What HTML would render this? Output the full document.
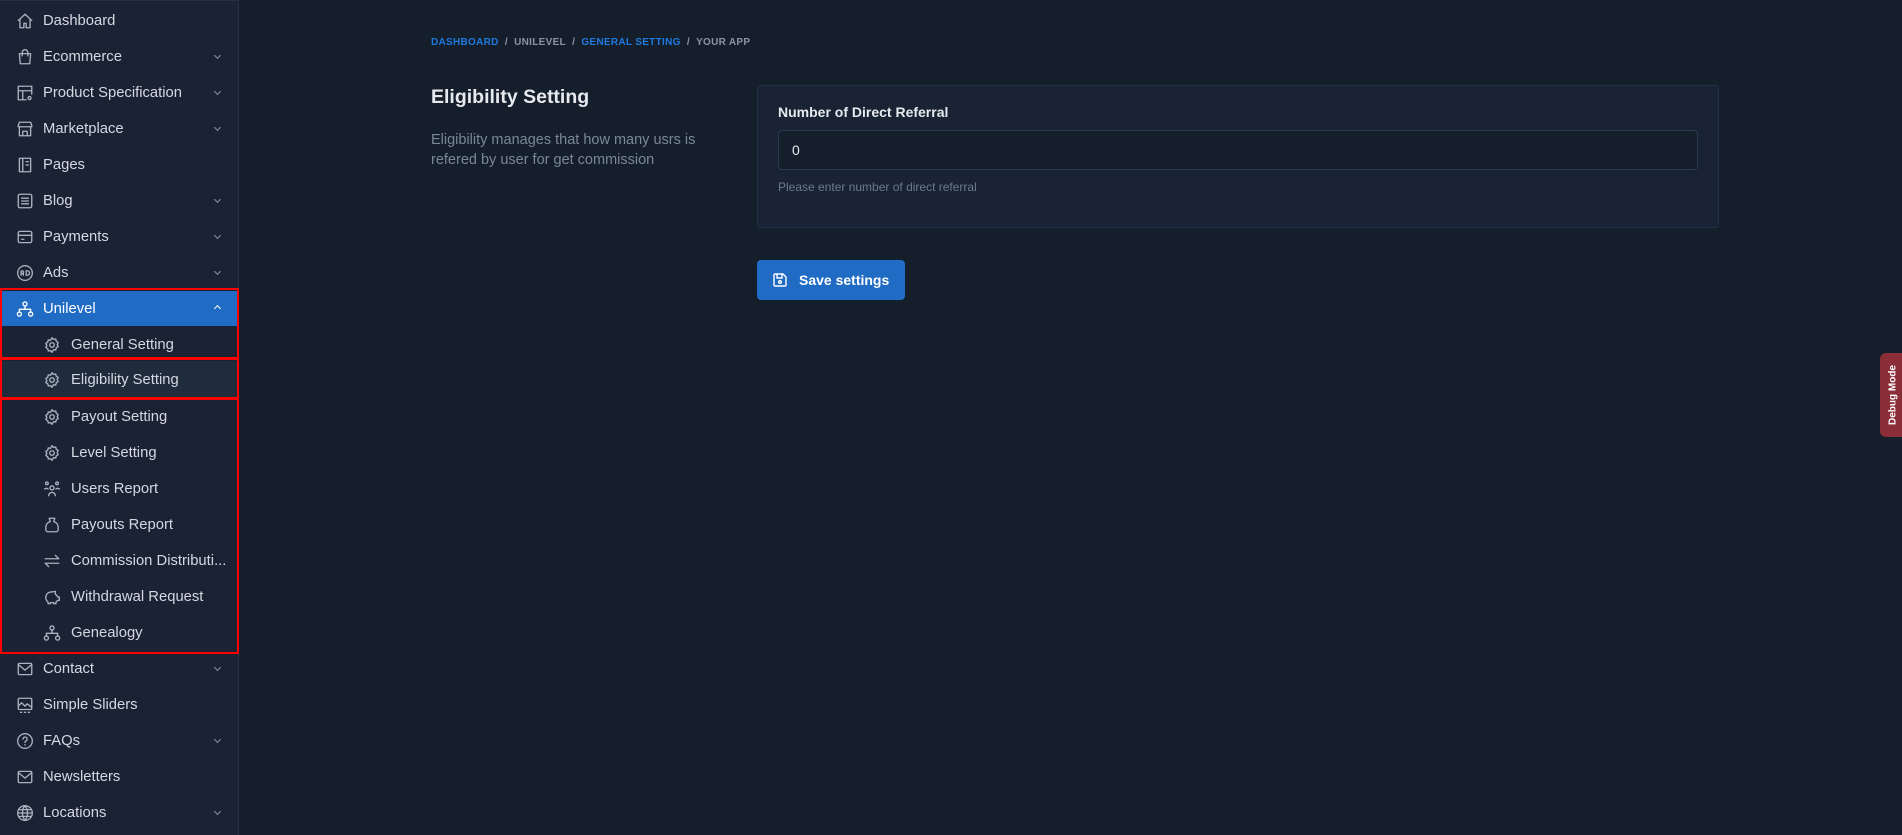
<!DOCTYPE html>
<html><head><meta charset="utf-8"><style>
*{box-sizing:border-box;margin:0;padding:0}
body{width:1902px;height:835px;background:#151e2b;font-family:"Liberation Sans",sans-serif;color:#e6e9ee;position:relative;overflow:hidden}
.sb{position:absolute;left:0;top:0;width:239px;height:835px;background:#1a2234;border-right:1px solid #243049;border-top:1px solid #243049}
.it{position:absolute;left:0;width:238px;height:36px;display:flex;align-items:center;font-size:14.8px;color:#d4d9e1}
.it svg{position:absolute;left:16px;top:9px;width:18px;height:18px;fill:none;stroke:#aab3c0;stroke-width:1.2;stroke-linecap:round;stroke-linejoin:round}
.it .t{position:absolute;left:43px}
.it.sub svg{left:43px}
.it.sub .t{left:71px}
.ch{position:absolute;left:215px;top:14px;width:5px;height:5px;border-right:1.3px solid #8a94a3;border-bottom:1.3px solid #8a94a3;transform:rotate(45deg)}
.act{background:#206bc4;color:#fff}
.act svg{stroke:#fff}
.rb{position:absolute;left:0;width:239px;border:2.5px solid #f00}
.main{position:absolute}
</style></head><body>
<div class="sb">
<div class="it" style="top:2px"><svg viewBox="0 0 16 16"><path d="M2 7.5L8 2l6 5.5M3.5 6.5V14h3.5v-4h2v4h3.5V6.5"/></svg><span class="t">Dashboard</span></div>
<div class="it" style="top:38px"><svg viewBox="0 0 16 16"><path d="M3 5h10l-.8 9H3.8z M5.5 7V4a2.5 2.5 0 015 0v3"/></svg><span class="t">Ecommerce</span><i class="ch"></i></div>
<div class="it" style="top:74px"><svg viewBox="0 0 16 16"><path d="M9 14H2V2h12v7M2 6h12M6 6v8"/><circle cx="12" cy="12.5" r="1.3"/></svg><span class="t">Product Specification</span><i class="ch"></i></div>
<div class="it" style="top:110px"><svg viewBox="0 0 16 16"><path d="M2 5l1-3h10l1 3v1H2zM3 6v8h10V6M6 14v-4h4v4"/></svg><span class="t">Marketplace</span><i class="ch"></i></div>
<div class="it" style="top:146px"><svg viewBox="0 0 16 16"><path d="M3 2h10v12H3zM6 2v12M9 5h2M9 8h2"/></svg><span class="t">Pages</span></div>
<div class="it" style="top:182px"><svg viewBox="0 0 16 16"><rect x="2" y="2" width="12" height="12" rx="1.5"/><path d="M5 5.5h6M5 8h6M5 10.5h6"/></svg><span class="t">Blog</span><i class="ch"></i></div>
<div class="it" style="top:218px"><svg viewBox="0 0 16 16"><rect x="2" y="3" width="12" height="10" rx="1.5"/><path d="M2 6.5h12M5 10h2"/></svg><span class="t">Payments</span><i class="ch"></i></div>
<div class="it" style="top:254px"><svg viewBox="0 0 16 16"><circle cx="8" cy="8" r="6.5"/><path d="M4.5 10V7a1 1 0 012 0v3M4.5 8.5h2M9 6v4h1a2 2 0 000-4z"/></svg><span class="t">Ads</span><i class="ch"></i></div>
<div class="it act" style="top:290px;height:35px"><svg viewBox="0 0 16 16"><circle cx="8" cy="3.5" r="1.8"/><circle cx="3" cy="12.5" r="1.8"/><circle cx="13" cy="12.5" r="1.8"/><path d="M8 5.3v3M3 10.7V8.3h10v2.4"/></svg><span class="t">Unilevel</span><i class="ch" style="transform:rotate(-135deg);top:15px;border-color:#fff"></i></div>
<div class="it sub" style="top:326px"><svg viewBox="0 0 16 16"><circle cx="8" cy="8" r="2"/><path d="M8 1.5l1.3 1.5 2-.3.5 2 1.7 1.1-.9 1.8.9 1.8-1.7 1.1-.5 2-2-.3L8 14.5l-1.3-1.5-2 .3-.5-2-1.7-1.1.9-1.8-.9-1.8 1.7-1.1.5-2 2 .3z"/></svg><span class="t">General Setting</span></div>
<div class="it sub" style="top:360px;height:37px;background:#202b3c"><svg viewBox="0 0 16 16" style="top:10px"><circle cx="8" cy="8" r="2"/><path d="M8 1.5l1.3 1.5 2-.3.5 2 1.7 1.1-.9 1.8.9 1.8-1.7 1.1-.5 2-2-.3L8 14.5l-1.3-1.5-2 .3-.5-2-1.7-1.1.9-1.8-.9-1.8 1.7-1.1.5-2 2 .3z"/></svg><span class="t">Eligibility Setting</span></div>
<div class="it sub" style="top:398px"><svg viewBox="0 0 16 16"><circle cx="8" cy="8" r="2"/><path d="M8 1.5l1.3 1.5 2-.3.5 2 1.7 1.1-.9 1.8.9 1.8-1.7 1.1-.5 2-2-.3L8 14.5l-1.3-1.5-2 .3-.5-2-1.7-1.1.9-1.8-.9-1.8 1.7-1.1.5-2 2 .3z"/></svg><span class="t">Payout Setting</span></div>
<div class="it sub" style="top:434px"><svg viewBox="0 0 16 16"><circle cx="8" cy="8" r="2"/><path d="M8 1.5l1.3 1.5 2-.3.5 2 1.7 1.1-.9 1.8.9 1.8-1.7 1.1-.5 2-2-.3L8 14.5l-1.3-1.5-2 .3-.5-2-1.7-1.1.9-1.8-.9-1.8 1.7-1.1.5-2 2 .3z"/></svg><span class="t">Level Setting</span></div>
<div class="it sub" style="top:470px"><svg viewBox="0 0 16 16"><circle cx="8" cy="7" r="1.8"/><circle cx="3.5" cy="3" r="1.2"/><circle cx="12.5" cy="3" r="1.2"/><path d="M5 14a3 3 0 016 0M1.5 8a2 2 0 013 0M11.5 8a2 2 0 013 0"/></svg><span class="t">Users Report</span></div>
<div class="it sub" style="top:506px"><svg viewBox="0 0 16 16"><path d="M5.5 2h5L9.5 5a5 5 0 014 5v2a2 2 0 01-2 2h-7a2 2 0 01-2-2v-2a5 5 0 014-5z"/></svg><span class="t">Payouts Report</span></div>
<div class="it sub" style="top:542px"><svg viewBox="0 0 16 16"><path d="M2 6h12l-3-3M14 10H2l3 3"/></svg><span class="t">Commission Distributi...</span></div>
<div class="it sub" style="top:578px"><svg viewBox="0 0 16 16"><path d="M11 3v2.5a5 5 0 012 2.5h1.5v3H13a5 5 0 01-1.5 1.5V14h-2v-1h-3v1h-2v-1.5A5 5 0 018 3.5z"/></svg><span class="t">Withdrawal Request</span></div>
<div class="it sub" style="top:614px"><svg viewBox="0 0 16 16"><circle cx="8" cy="3.5" r="1.8"/><circle cx="3" cy="12.5" r="1.8"/><circle cx="13" cy="12.5" r="1.8"/><path d="M8 5.3v3M3 10.7V8.3h10v2.4"/></svg><span class="t">Genealogy</span></div>
<div class="it" style="top:650px"><svg viewBox="0 0 16 16"><rect x="2" y="3" width="12" height="10" rx="1"/><path d="M2 4l6 5 6-5"/></svg><span class="t">Contact</span><i class="ch"></i></div>
<div class="it" style="top:686px"><svg viewBox="0 0 16 16"><rect x="2" y="2" width="12" height="10" rx="1"/><path d="M2 9l3-3 3 3 2-2 4 3M4 14.5h1M7.5 14.5h1M11 14.5h1"/></svg><span class="t">Simple Sliders</span></div>
<div class="it" style="top:722px"><svg viewBox="0 0 16 16"><circle cx="8" cy="8" r="6.5"/><path d="M6.3 6.3a1.8 1.8 0 113 1.3c-.8.5-1.3.9-1.3 1.7M8 11.3v.2"/></svg><span class="t">FAQs</span><i class="ch"></i></div>
<div class="it" style="top:758px"><svg viewBox="0 0 16 16"><rect x="2" y="3" width="12" height="10" rx="1"/><path d="M2 4l6 5 6-5"/></svg><span class="t">Newsletters</span></div>
<div class="it" style="top:794px"><svg viewBox="0 0 16 16"><circle cx="8" cy="8" r="6.5"/><path d="M1.5 8h13M8 1.5c-3 3.5-3 9.5 0 13M8 1.5c3 3.5 3 9.5 0 13M2.5 5h11M2.5 11h11"/></svg><span class="t">Locations</span><i class="ch"></i></div>
</div>
<div class="rb" style="top:288px;height:71px"></div>
<div class="rb" style="top:358px;height:41px"></div>
<div class="rb" style="top:398px;height:256px"></div>

<div class="main" style="left:431px;top:37px;font-size:10px;font-weight:bold;letter-spacing:.3px;color:#8a94a3;white-space:nowrap"><span style="color:#1f7ae0">DASHBOARD</span>&nbsp;&nbsp;/&nbsp;&nbsp;UNILEVEL&nbsp;&nbsp;/&nbsp;&nbsp;<span style="color:#1f7ae0">GENERAL SETTING</span>&nbsp;&nbsp;/&nbsp;&nbsp;YOUR APP</div>
<div class="main" style="left:431px;top:86px;font-size:19.5px;font-weight:bold;color:#e6e9ee">Eligibility Setting</div>
<div class="main" style="left:431px;top:130px;font-size:14.5px;line-height:20px;color:#7b8698;width:310px">Eligibility manages that how many usrs is refered by user for get commission</div>
<div class="main" style="left:757px;top:85px;width:962px;height:143px;background:#192334;border:1px solid #243049;border-radius:4px"></div>
<div class="main" style="left:778px;top:104px;font-size:14px;font-weight:bold;color:#e6e9ee">Number of Direct Referral</div>
<div class="main" style="left:778px;top:130px;width:920px;height:40px;background:#151e2b;border:1px solid #2b3950;border-radius:4px;font-size:14px;padding:11px 13px;color:#e6e9ee">0</div>
<div class="main" style="left:778px;top:180px;font-size:12px;color:#6e798b">Please enter number of direct referral</div>
<div class="main" style="left:757px;top:260px;width:148px;height:40px;background:#206bc4;border-radius:4px;display:flex;align-items:center;font-size:14px;font-weight:bold;color:#fff"><svg viewBox="0 0 16 16" style="position:absolute;left:15px;top:12px;width:16px;height:16px;fill:none;stroke:#fff;stroke-width:1.4"><path d="M3 2h8l3 3v8a1 1 0 01-1 1H3a1 1 0 01-1-1V3a1 1 0 011-1zM5 2v4h5V2"/><circle cx="8" cy="10" r="1.3"/></svg><span style="position:absolute;left:42px">Save settings</span></div>
<div class="main" style="left:1880px;top:353px;width:26px;height:84px;background:#8b2e38;border-radius:6px 0 0 6px"><div style="position:absolute;left:13px;top:42px;transform:translate(-50%,-50%) rotate(-90deg);font-size:10px;font-weight:bold;color:#fff;white-space:nowrap">Debug Mode</div></div>
</body></html>
